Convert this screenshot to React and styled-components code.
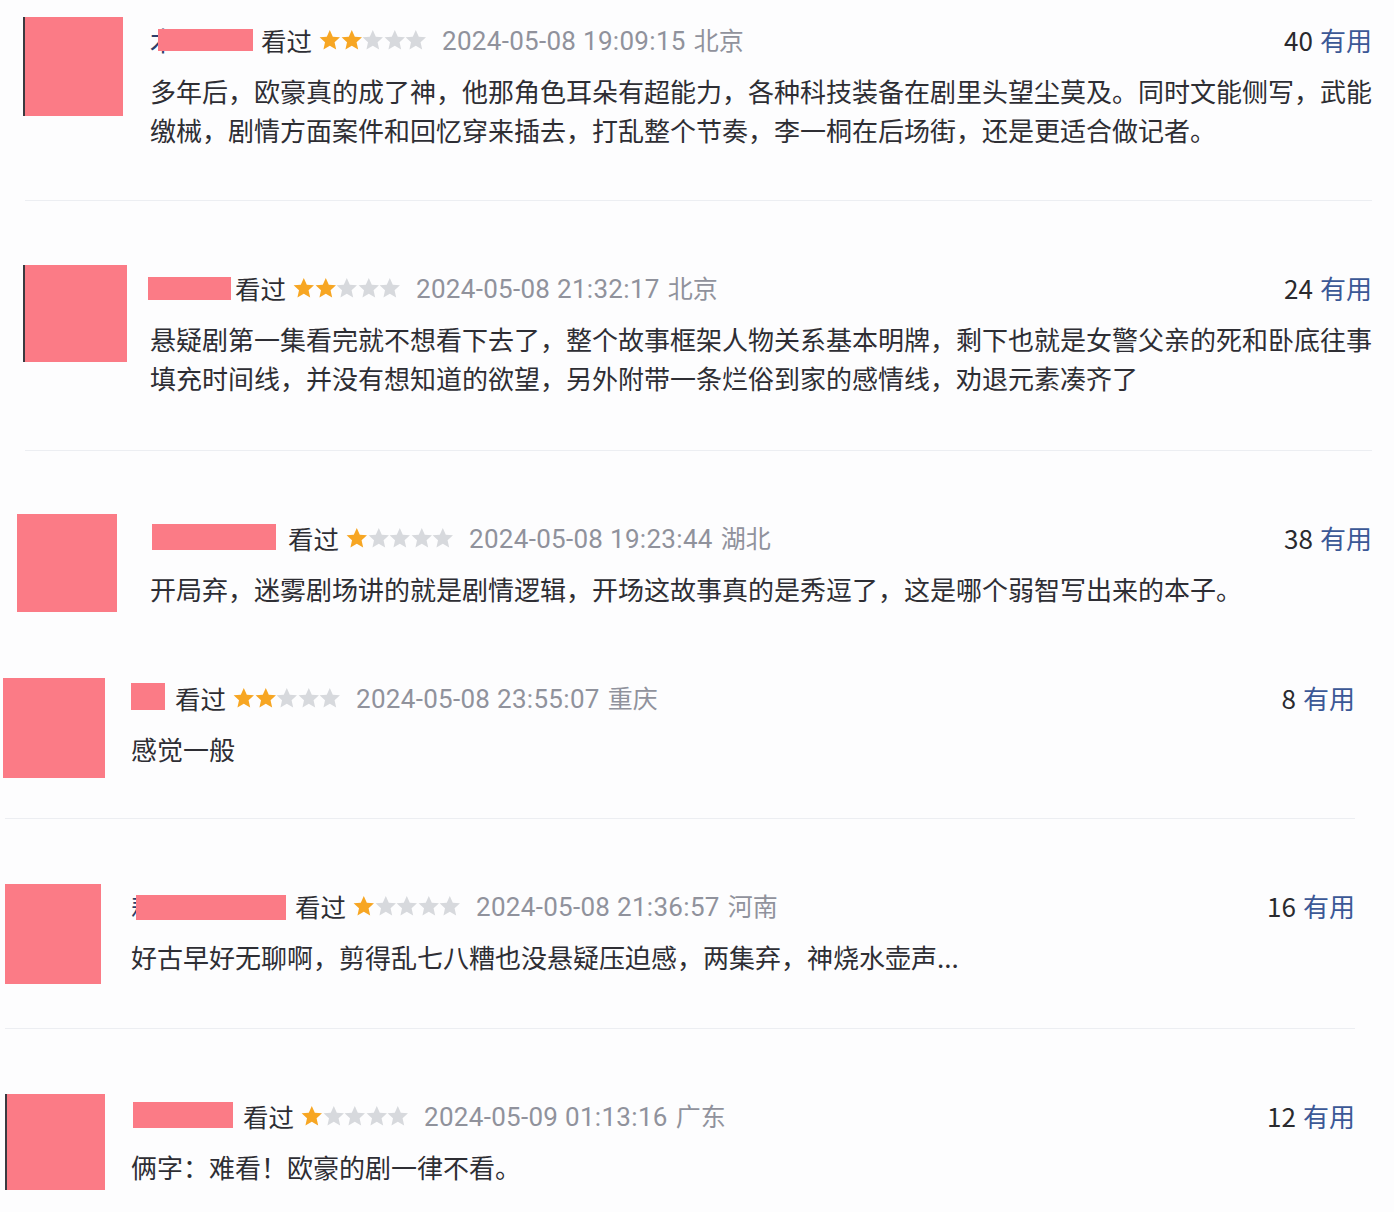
import React from "react";
import styled, { createGlobalStyle } from "styled-components";

const Global = createGlobalStyle`
  html, body { margin: 0; padding: 0; background: #fdfdfe; }
  body { font-family: "Noto Sans CJK SC", "Noto Sans", sans-serif; color: #2a2a2e; }
`;

const Page = styled.div`
  width: 1394px;
  height: 1212px;
  overflow: hidden;
  display: flex;
  flex-direction: column;
  background: #fdfdfe;
`;

const Item = styled.section`
  display: flex;
  align-items: flex-start;
  height: ${(p) => p.$h}px;
  padding-left: ${(p) => p.$left}px;
  box-sizing: border-box;
  flex: none;
`;

const Avatar = styled.div`
  flex: none;
  width: ${(p) => p.$w}px;
  height: ${(p) => p.$h}px;
  margin-top: ${(p) => p.$top}px;
  background: #fb7b86;
  box-shadow: ${(p) => (p.$edge ? "-2px 0 0 #3a3a40" : "none")};
`;

const Body = styled.div`
  flex: none;
  width: ${(p) => p.$w}px;
  margin-left: ${(p) => p.$ml}px;
  padding-top: ${(p) => p.$top}px;
  box-sizing: border-box;
`;

const Meta = styled.div`
  display: flex;
  align-items: center;
  height: 36px;
  padding-right: 12px;
`;

const NameSlot = styled.span`
  position: relative;
  flex: none;
  width: ${(p) => p.$w}px;
  height: 36px;
  font-size: 26px;
  line-height: 36px;
  color: #2c3e6b;
  white-space: nowrap;
  overflow: visible;
`;

const Redaction = styled.span`
  position: absolute;
  left: ${(p) => p.$x}px;
  top: ${(p) => p.$y}px;
  width: ${(p) => p.$w}px;
  height: ${(p) => p.$h}px;
  background: #fb7b86;
`;

const Watched = styled.span`
  flex: none;
  margin-left: ${(p) => p.$gap}px;
  font-size: 25.5px;
  line-height: 36px;
  color: #2e2e34;
`;

const Stars = styled.span`
  display: flex;
  align-items: center;
  flex: none;
  margin-left: 7px;
  width: 108px;
`;

const Date = styled.span`
  flex: none;
  margin-left: 15px;
  font-family: "Roboto", "Noto Sans CJK SC", sans-serif;
  font-size: 26px;
  line-height: 36px;
  color: #90929c;
  letter-spacing: 0.3px;
`;

const Place = styled.span`
  font-family: "Noto Sans CJK SC", sans-serif;
  font-size: 25px;
  margin-left: 8px;
  letter-spacing: 0;
`;

const Votes = styled.span`
  margin-left: auto;
  flex: none;
  font-size: 26px;
  line-height: 36px;
  color: #2a2a2e;
`;

const Useful = styled.span`
  color: #3b5896;
  margin-left: 7px;
`;

const Text = styled.p`
  margin: 13px 0 0;
  font-size: 26px;
  line-height: 39px;
  color: #2e2e34;
  letter-spacing: 0;
`;

const Divider = styled.hr`
  flex: none;
  margin: 0 0 0 ${(p) => p.$left}px;
  width: ${(p) => p.$w}px;
  height: 1px;
  border: 0;
  background: #eceef2;
`;

const Star = ({ on }) => (
  <svg width="21.6" height="22" viewBox="1.4 1.8 21.2 20.6">
    <path
      d="M12 2.2l2.95 6.6 7.05.7-5.3 4.8 1.55 7.1L12 17.7l-6.25 3.7 1.55-7.1L2 9.5l7.05-.7z"
      fill={on ? "#f7a623" : "#d7d9dd"}
    />
  </svg>
);

const comments = [
  {
    h: 200, left: 25, av: { w: 98, h: 99, top: 17, edge: true }, ml: 27, top: 22, right: 1372, bodyX: 150,
    name: { w: 103, glyph: "木", rx: 8, ry: 7, rw: 95, rh: 22, gap: 8 },
    stars: 2, date: "2024-05-08 19:09:15", place: "北京", votes: 40,
    text: "多年后，欧豪真的成了神，他那角色耳朵有超能力，各种科技装备在剧里头望尘莫及。同时文能侧写，武能缴械，剧情方面案件和回忆穿来插去，打乱整个节奏，李一桐在后场街，还是更适合做记者。",
    divider: { left: 25, w: 1347 },
  },
  {
    h: 249, left: 25, av: { w: 102, h: 97, top: 64, edge: true }, ml: 23, top: 69, right: 1372, bodyX: 150,
    name: { w: 81, glyph: "", rx: -2, ry: 7, rw: 83, rh: 23, gap: 4 },
    stars: 2, date: "2024-05-08 21:32:17", place: "北京", votes: 24,
    text: "悬疑剧第一集看完就不想看下去了，整个故事框架人物关系基本明牌，剩下也就是女警父亲的死和卧底往事填充时间线，并没有想知道的欲望，另外附带一条烂俗到家的感情线，劝退元素凑齐了",
    divider: { left: 25, w: 1347 },
  },
  {
    h: 189, left: 17, av: { w: 100, h: 98, top: 63 }, ml: 33, top: 69, right: 1372, bodyX: 150,
    name: { w: 128, glyph: "", rx: 2, ry: 4, rw: 124, rh: 26, gap: 10 },
    stars: 1, date: "2024-05-08 19:23:44", place: "湖北", votes: 38,
    text: "开局弃，迷雾剧场讲的就是剧情逻辑，开场这故事真的是秀逗了，这是哪个弱智写出来的本子。",
  },
  {
    h: 178, left: 3, av: { w: 102, h: 100, top: 38 }, ml: 26, top: 40, right: 1355, bodyX: 131,
    name: { w: 34, glyph: "", rx: 0, ry: 3, rw: 34, rh: 27, gap: 10 },
    stars: 2, date: "2024-05-08 23:55:07", place: "重庆", votes: 8,
    text: "感觉一般",
    divider: { left: 5, w: 1350 },
  },
  {
    h: 209, left: 5, av: { w: 96, h: 100, top: 65 }, ml: 30, top: 69, right: 1355, bodyX: 131,
    name: { w: 155, glyph: "耜", rx: 5, ry: 7, rw: 150, rh: 25, gap: 9 },
    stars: 1, date: "2024-05-08 21:36:57", place: "河南", votes: 16,
    text: "好古早好无聊啊，剪得乱七八糟也没悬疑压迫感，两集弃，神烧水壶声...",
    divider: { left: 5, w: 1350 },
  },
  {
    h: 183, left: 7, av: { w: 98, h: 96, top: 65, edge: true }, ml: 26, top: 69, right: 1355, bodyX: 131,
    name: { w: 102, glyph: "", rx: 2, ry: 4, rw: 100, rh: 26, gap: 10 },
    stars: 1, date: "2024-05-09 01:13:16", place: "广东", votes: 12,
    text: "俩字：难看！欧豪的剧一律不看。",
  },
];

export default function App() {
  return (
    <Page>
      <Global />
      {comments.map((c, i) => (
        <React.Fragment key={i}>
          <Item $h={c.h} $left={c.left}>
            <Avatar $w={c.av.w} $h={c.av.h} $top={c.av.top} $edge={c.av.edge} />
            <Body $ml={c.ml} $top={c.top} $w={c.right - c.bodyX + 12}>
              <Meta>
                <NameSlot $w={c.name.w}>
                  {c.name.glyph}
                  <Redaction $x={c.name.rx} $y={c.name.ry} $w={c.name.rw} $h={c.name.rh} />
                </NameSlot>
                <Watched $gap={c.name.gap}>看过</Watched>
                <Stars>
                  {[0, 1, 2, 3, 4].map((s) => (
                    <Star key={s} on={s < c.stars} />
                  ))}
                </Stars>
                <Date>
                  {c.date}
                  <Place>{c.place}</Place>
                </Date>
                <Votes>
                  {c.votes}
                  <Useful>有用</Useful>
                </Votes>
              </Meta>
              <Text>{c.text}</Text>
            </Body>
          </Item>
          {c.divider && <Divider $left={c.divider.left} $w={c.divider.w} />}
        </React.Fragment>
      ))}
    </Page>
  );
}
